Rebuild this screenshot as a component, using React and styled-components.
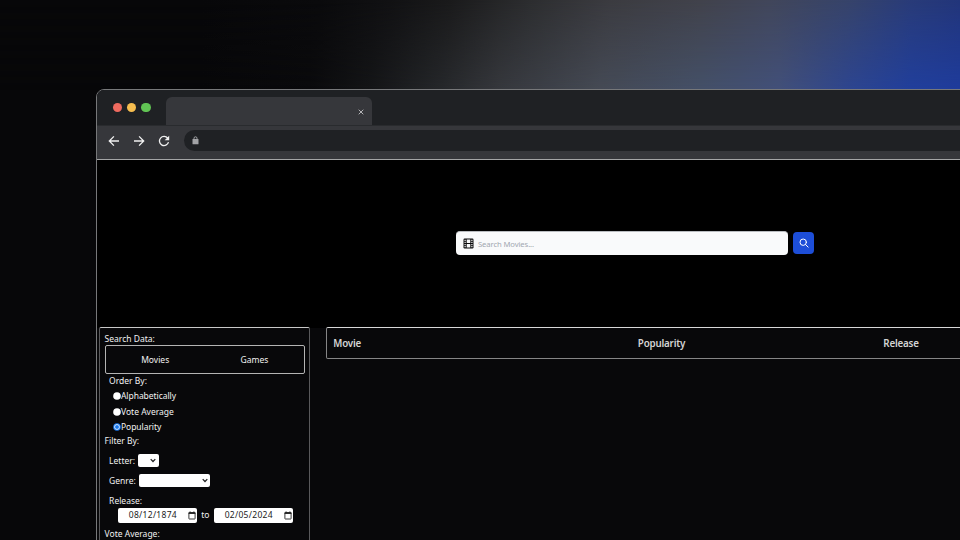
import React from "react";
import styled, { createGlobalStyle } from "styled-components";

const GlobalStyle = createGlobalStyle`
  * { box-sizing: border-box; }
  html, body { margin: 0; background: #070709; overflow: hidden; }
  body { font-family: "Noto Sans", "Open Sans", sans-serif; color: #f2f2f2; }
`;

const Stage = styled.main`
  position: relative;
  isolation: isolate;
  width: 960px;
  height: 540px;
  overflow: hidden;
  padding: 89px 0 0 97px;
  background: linear-gradient(90deg, #070709 200px, #0a0a0c 310px, #141517 370px, #25272a 440px, #36383d 500px, #454a55 600px, #445068 700px, #42507a 780px, #2d4590 850px, #213f9c 910px, #1f3c9c 960px);

  &::before {
    content: "";
    position: absolute;
    inset: 0 0 auto;
    z-index: -1;
    height: 90px;
    background: linear-gradient(90deg, #070709 200px, #0a0a0c 320px, #111113 390px, #1a1a1b 450px, #2c2d2f 530px, #3b3b40 610px, #41424b 700px, #41465a 770px, #36436a 850px, #293b78 910px, #22357a 960px);
    mask-image: linear-gradient(#000, transparent);
  }
`;

const BrowserWindow = styled.section`
  width: 1120px;
  height: 700px;
  margin-left: -1px;
  border: 1px solid #77787a;
  border-radius: 8px 0 0 0;
  overflow: hidden;
  background: #08080a;
`;

const TabBar = styled.div`
  display: flex;
  height: 36px;
  padding: 7px 0 0 15.6px;
  background: #1f2124;
  border-bottom: 1px solid #292b2e;
`;

const Lights = styled.div`
  display: flex;
  gap: 5.2px;
  height: 9px;
  margin-top: 5.7px;
  width: 53.4px;
`;

const Light = styled.span`
  width: 9.2px;
  height: 9.2px;
  border-radius: 50%;
  background: ${(p) => p.$color};
`;

const Tab = styled.div`
  display: flex;
  align-items: center;
  justify-content: flex-end;
  width: 206px;
  height: 28px;
  padding: 1px 8px 0 0;
  border-radius: 6px 6px 0 0;
  background: #36373b;
`;

const Toolbar = styled.div`
  display: flex;
  align-items: center;
  height: 33px;
  padding: 0 0 3px 10.6px;
  background: #36373b;
`;

const NavButton = styled.span`
  display: flex;
  width: 25.2px;
  height: 12px;
  color: #f1f1f1;
`;

const AddressBar = styled.div`
  display: flex;
  align-items: center;
  flex: 1;
  height: 21px;
  margin: -1px 0 0 0.8px;
  padding-left: 8px;
  border-radius: 11px 0 0 11px;
  background: #1f2124;
`;

const Hero = styled.header`
  display: flex;
  align-items: center;
  height: 169px;
  padding: 0 0 2px 359px;
  gap: 5px;
  border-top: 1px solid #a4a5a6;
  background: #000;
`;

const SearchField = styled.div`
  display: flex;
  align-items: center;
  gap: 4px;
  width: 332px;
  height: 24px;
  padding-left: 7px;
  border: 1px solid #b9bcc0;
  border-width: 1px 0 0;
  border-radius: 4px;
  background: #f9fafb;
`;

const Placeholder = styled.span`
  font-size: 7.7px;
  line-height: 12px;
  letter-spacing: -0.12px;
  color: #a2a8b1;
`;

const SearchButton = styled.button`
  display: flex;
  align-items: center;
  justify-content: center;
  width: 21px;
  height: 22px;
  padding: 0;
  border: 0;
  border-radius: 4px;
  color: #fff;
  background: #1d4ed8;
`;

const Content = styled.div`
  display: flex;
  align-items: flex-start;
  gap: 16px;
  padding-left: 2px;
  margin-top: -1px;
`;

const Sidebar = styled.aside`
  width: 211px;
  height: 400px;
  padding: 5px 4px 0 4.6px;
  border: 1px solid #59595b;
  border-top-color: #c8c8c8;
  border-radius: 2px;
  background: #08080a;
`;

const Line = styled.div`
  display: flex;
  align-items: center;
  height: ${(p) => p.$h}px;
  padding-left: ${(p) => p.$indent || 0}px;
  margin-top: ${(p) => p.$top || 0}px;
  gap: ${(p) => p.$gap || 0}px;
  font-size: 8.5px;
  letter-spacing: ${(p) => p.$track || 0}px;
  line-height: 12px;
  white-space: nowrap;
`;

const Label = styled.span`
  width: ${(p) => p.$w}px;
`;

const Switcher = styled.div`
  display: grid;
  grid-template-columns: 1fr 1fr;
  align-items: center;
  justify-items: center;
  height: 29px;
  border: 1px solid #b4b4b4;
  border-radius: 2px;
  font-size: 8.5px;
`;

const RadioIcon = styled.svg`
  width: 8px;
  height: 8px;
  flex: none;
`;

const Select = styled.span`
  display: flex;
  align-items: center;
  justify-content: flex-end;
  width: ${(p) => p.$w}px;
  height: 13px;
  padding-right: 2.5px;
  border-radius: 2px;
  background: #fff;
`;

const DateField = styled.span`
  display: flex;
  align-items: center;
  justify-content: space-between;
  flex: none;
  width: 79.3px;
  height: 14.5px;
  padding: 0 1.4px 0 11px;
  border-radius: 2px;
  color: #222;
  background: #fff;
  font-size: 8.5px;
  letter-spacing: 0.3px;
`;

const TableHead = styled.div`
  display: grid;
  grid-template-columns: 304.5px 245.5px 1fr;
  align-items: center;
  width: 850px;
  height: 32px;
  padding-left: 6.3px;
  border: 1px solid #858586;
  border-top-color: #d8d8d8;
  border-radius: 2px;
  font-size: 9.8px;
  font-weight: 600;
  letter-spacing: -0.19px;
  color: #d4d4d4;
`;

const Radio = ({ on }) => (
  <RadioIcon viewBox="0 0 8 8">
    <circle cx="4" cy="4" r="3.8" fill={on ? "#1677f0" : "#fff"} />
    {on && <circle cx="4" cy="4" r="2.45" fill="#1677f0" stroke="#fff" strokeWidth=".8" />}
  </RadioIcon>
);

const Arrow = ({ forward }) => (
  <svg width="12" height="12" viewBox="0 0 12 12" fill="none" stroke="currentColor" strokeWidth="1.3">
    <path d={forward ? "M1 6h9.6M6.1 1.4 10.7 6l-4.6 4.6" : "M11 6H1.4M5.9 1.4 1.3 6l4.6 4.6"} />
  </svg>
);

const Reload = () => (
  <svg width="12" height="12" viewBox="0 0 12 12" fill="none" stroke="currentColor" strokeWidth="1.3">
    <path d="M9.7 3.2A4.6 4.6 0 1 0 10.5 7.2" />
    <path d="M11.2.8v4.5H6.7Z" fill="currentColor" stroke="none" />
  </svg>
);

const Lock = () => (
  <svg width="7" height="9" viewBox="0 0 7 9">
    <path d="M2 3.5V2.3a1.5 1.5 0 0 1 3 0v1.2" fill="none" stroke="#a2a3a6" />
    <rect x=".5" y="3" width="6" height="5.3" rx=".6" fill="#a2a3a6" />
  </svg>
);

const Close = () => (
  <svg width="6" height="6" viewBox="0 0 6 6" stroke="#c3c3c5" strokeWidth=".9">
    <path d="m.7.7 4.6 4.6m0-4.6L.7 5.3" />
  </svg>
);

const Film = () => (
  <svg width="11" height="11" viewBox="0 0 11 11">
    <rect x=".5" y=".5" width="10" height="10" rx="1.2" fill="#0b0b0c" />
    <path
      d="M3.7 1.6h3.6v3.3H3.7ZM3.7 6.1h3.6v3.3H3.7ZM1.5 1.7h1.2v1.3H1.5ZM1.5 3.8h1.2v1.3H1.5ZM1.5 5.9h1.2v1.3H1.5ZM1.5 8h1.2v1.3H1.5ZM8.3 1.7h1.2v1.3H8.3ZM8.3 3.8h1.2v1.3H8.3ZM8.3 5.9h1.2v1.3H8.3ZM8.3 8h1.2v1.3H8.3Z"
      fill="#f9fafb"
    />
  </svg>
);

const Magnifier = () => (
  <svg width="10" height="10" viewBox="0 0 10 10" fill="none" stroke="currentColor" strokeLinecap="round">
    <circle cx="4.2" cy="4.2" r="3.2" />
    <path d="m6.6 6.6 2.5 2.5" />
  </svg>
);

const Chevron = () => (
  <svg width="6" height="5" viewBox="0 0 6 5" fill="none" stroke="#222" strokeWidth="1.25">
    <path d="m.7 1.1 2.3 2.4 2.3-2.4" />
  </svg>
);

const Calendar = () => (
  <svg width="8" height="9" viewBox="0 0 8 9" fill="none" stroke="#222">
    <rect x=".9" y="1.5" width="6.2" height="6.5" rx=".4" strokeWidth=".9" />
    <path d="M.6 2.2h6.8" strokeWidth="1.5" />
    <path d="M2.1.4v1.3M5.9.4v1.3" strokeWidth=".9" />
  </svg>
);

const orders = [
  { label: "Alphabetically", track: -0.05 },
  { label: "Vote Average" },
  { label: "Popularity", track: -0.05, on: true },
];

export default function App() {
  return (
    <>
      <GlobalStyle />
      <Stage>
        <BrowserWindow>
          <TabBar>
            <Lights>
              <Light $color="#ee6a5f" />
              <Light $color="#f5bd4f" />
              <Light $color="#61c454" />
            </Lights>
            <Tab><Close /></Tab>
          </TabBar>
          <Toolbar>
            <NavButton><Arrow /></NavButton>
            <NavButton><Arrow forward /></NavButton>
            <NavButton><Reload /></NavButton>
            <AddressBar><Lock /></AddressBar>
          </Toolbar>
          <Hero>
            <SearchField>
              <Film />
              <Placeholder>Search Movies...</Placeholder>
            </SearchField>
            <SearchButton aria-label="Search"><Magnifier /></SearchButton>
          </Hero>
          <Content>
            <Sidebar>
              <Line $h={12}>Search Data:</Line>
              <Switcher>
                <span>Movies</span>
                <span>Games</span>
              </Switcher>
              <Line $h={13} $indent={4.5}>Order By:</Line>
              {orders.map((o, i) => (
                <Line key={o.label} $h={15.7} $indent={8.4} $top={i ? 0 : 1} $track={o.track}>
                  <Radio on={o.on} />
                  {o.label}
                </Line>
              ))}
              <Line $h={12}>Filter By:</Line>
              <Line $h={20} $indent={4.5} $top={3.5}>
                <Label $w={28.8}>Letter:</Label>
                <Select $w={20.7}><Chevron /></Select>
              </Line>
              <Line $h={20} $indent={4.5}>
                <Label $w={29.6}>Genre:</Label>
                <Select $w={71.7}><Chevron /></Select>
              </Line>
              <Line $h={13} $indent={4.5} $top={4.3}>Release:</Line>
              <Line $h={15} $indent={13.2} $gap={4.2}>
                <DateField>08/12/1874 <Calendar /></DateField>
                to
                <DateField>02/05/2024 <Calendar /></DateField>
              </Line>
              <Line $h={12} $top={5}>Vote Average:</Line>
            </Sidebar>
            <TableHead>
              <span>Movie</span>
              <span>Popularity</span>
              <span>Release</span>
            </TableHead>
          </Content>
        </BrowserWindow>
      </Stage>
    </>
  );
}
